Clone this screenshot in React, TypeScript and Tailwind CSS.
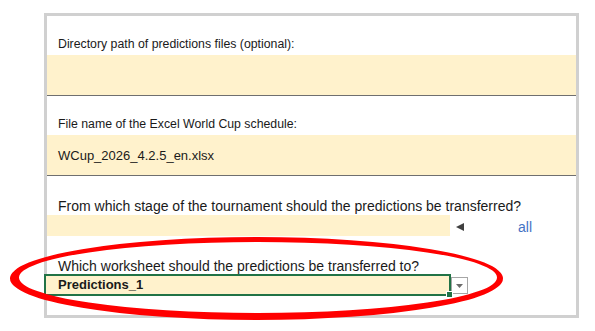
import React from 'react';

const cream = 'bg-[#fff2cc]';

export default function App() {
  return (
    <div
      className="relative w-[595px] h-[331px] overflow-hidden bg-white text-[#1a1a1a]"
      style={{ fontFamily: '"Liberation Sans", Arial, sans-serif' }}
    >
      {/* sheet frame */}
      <div className="ml-[44px] mt-[13px] w-[535px] h-[305px] border-[3px] border-[#d0d0d0] flex flex-col">
        <div className="h-[39px] flex items-end pl-[11px] pb-[4px] text-[12.3px] leading-[14px]">
          Directory path of predictions files (optional):
        </div>
        <div className={`h-[40px] ${cream}`} />
        <div className="h-px bg-[#6f6f6f]" />

        <div className="h-[39px] flex items-end pl-[11px] pb-[4px] text-[12.3px] leading-[14px]">
          File name of the Excel World Cup schedule:
        </div>
        <div className={`h-[40px] ${cream} pl-[11px] pt-[13px] text-[13px] leading-[16px]`}>
          WCup_2026_4.2.5_en.xlsx
        </div>
        <div className="h-px bg-[#6f6f6f]" />

        <div className="h-[39px] flex items-end pl-[11px] pb-[1px] text-[14px] leading-[16px]">
          From which stage of the tournament should the predictions be transferred?
        </div>
        <div className="h-[21px] flex items-center">
          <div className={`w-[403px] h-full ${cream}`} />
          <svg width="8" height="8" viewBox="0 0 8 8" className="ml-[6px] mt-[3px]">
            <path d="M0 4 L8 0 L8 8 Z" fill="#3f3f3f" />
          </svg>
          <span className="ml-[54px] mt-[2px] text-[14px] leading-[16px] text-[#4472c4]">all</span>
        </div>

        <div className="h-[38px] flex items-end pl-[11px] text-[14px] leading-[16px]">
          Which worksheet should the predictions be transferred to?
        </div>
        <div className="flex -ml-[3px]">
          <div className={`relative w-[407px] h-[22px] border-2 border-[#217346] ${cream} pl-[12px] text-[13px] leading-[18px] font-bold`}>
            Predictions_1
            <div className="absolute -right-[3px] -bottom-[3px] w-[5px] h-[5px] bg-[#217346] border border-white box-content -mr-px -mb-px" />
          </div>
          <div className="w-[17px] h-[17px] mt-[3px] border border-[#a6a6a6] bg-white flex items-center justify-center">
            <svg width="7" height="4" viewBox="0 0 7 4">
              <path d="M0 0 L7 0 L3.5 4 Z" fill="#6b6b6b" />
            </svg>
          </div>
        </div>
      </div>

      {/* red highlight ellipse, hand drawn so thicker on the left */}
      <svg className="absolute inset-0 pointer-events-none" width="595" height="331" viewBox="0 0 595 331">
        <path
          fillRule="evenodd"
          fill="#ff0000"
          d="M10 278.5 A246.5 41.5 0 1 0 503 278.5 A246.5 41.5 0 1 0 10 278.5 Z M19 277.5 A239 35.5 0 1 0 497 277.5 A239 35.5 0 1 0 19 277.5 Z"
        />
      </svg>
    </div>
  );
}
